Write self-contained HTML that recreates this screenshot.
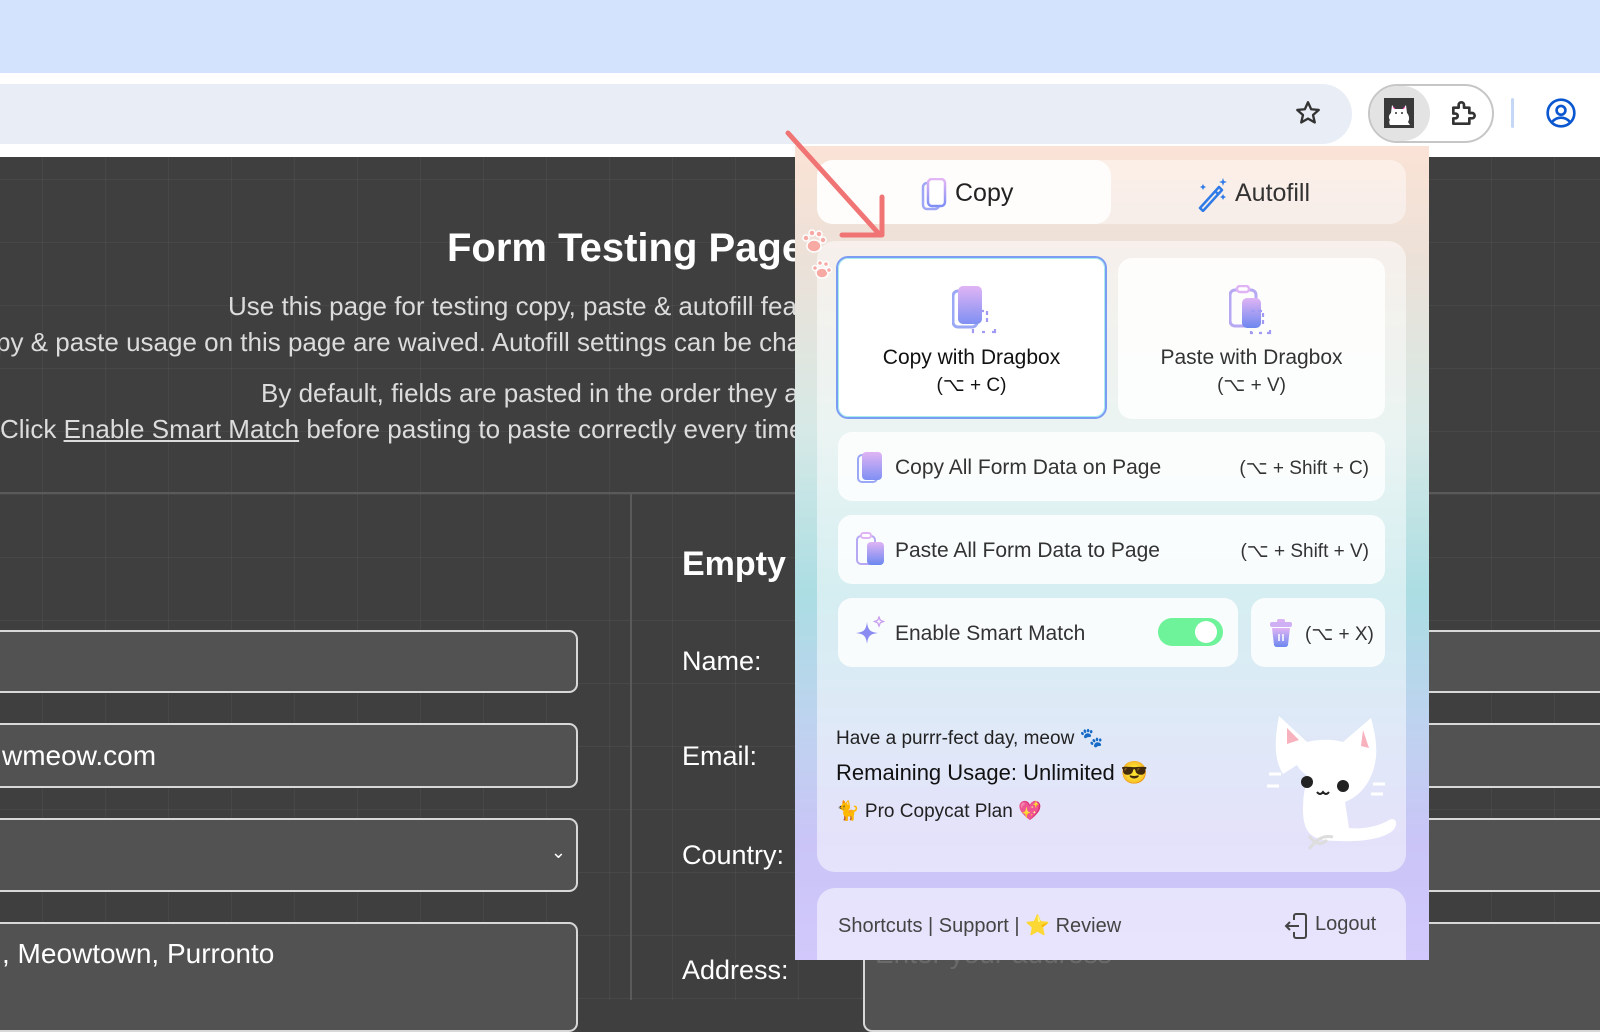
<!DOCTYPE html>
<html><head><meta charset="utf-8">
<style>
*{box-sizing:border-box;margin:0;padding:0}
body{width:1600px;height:1000px;overflow:hidden;position:relative;font-family:"Liberation Sans","Noto Sans CJK JP",sans-serif;background:#3f3f3f}
.abs{position:absolute}
.top{left:0;top:0;width:1600px;height:73px;background:#d3e3fd}
.tool{left:0;top:73px;width:1600px;height:84px;background:#fff}
.omni{left:-40px;top:84px;width:1392px;height:60px;border-radius:30px;background:#e9eef6}
.page{left:0;top:157px;width:1600px;height:843px;background-color:#3f3f3f;background-image:linear-gradient(rgba(255,255,255,.045) 1px,transparent 1px),linear-gradient(90deg,rgba(255,255,255,.045) 1px,transparent 1px);background-size:63px 63px;background-position:42px 22px}
.pt{color:#dcdcdc;font-size:26px;white-space:nowrap}
.inp{border:2px solid #d8d8d8;border-radius:9px;background:#525252;color:#fff;font-size:28px;padding-left:10px;display:flex;align-items:center}
.lab{color:#fff;font-size:27px}
.popup{left:795px;top:146px;width:634px;height:814px;background:linear-gradient(180deg,#fbe2d6 0%,#ece1d8 14%,#d6e9e6 35%,#abdde3 55%,#bfd2f0 72%,#c9c5f6 85%,#d2c8fb 100%);overflow:hidden}
.card{background:rgba(255,255,255,.82);border-radius:14px}
.rowt{font-size:21px;color:#333}
.sc{font-size:19px;color:#333}
</style></head><body>
<div class="abs top"></div>
<div class="abs tool"></div>
<div class="abs omni"></div>
<svg class="abs" style="left:1294px;top:99px" width="28" height="28" viewBox="0 0 24 24"><path d="M12 2.8l2.7 6 6.5.6-4.9 4.3 1.5 6.4L12 16.8l-5.8 3.3 1.5-6.4L2.8 9.4l6.5-.6z" fill="none" stroke="#333" stroke-width="2" stroke-linejoin="round"/></svg>
<div class="abs" style="left:1368px;top:84px;width:126px;height:59px;border:2px solid #c6c6c6;border-radius:30px"></div>
<div class="abs" style="left:1370px;top:86px;width:60px;height:55px;border-radius:28px;background:#e3e3e3"></div>
<div class="abs" style="left:1384px;top:98px;width:30px;height:30px;background:#3a3a3a"></div>
<svg class="abs" style="left:1384px;top:98px" width="30" height="30" viewBox="0 0 30 30"><path d="M8 7l3 4h8l3-4 1 8c2 2 3 6 1 9l2 3H6c-1-2-1-4 0-5-2-3-1-5 1-7z" fill="#fff"/><path d="M9 9l2 2M21 9l-2 2" stroke="#f4b" stroke-width="1"/><circle cx="12" cy="15" r="1" fill="#333"/><circle cx="18" cy="15" r="1" fill="#333"/></svg>
<svg class="abs" style="left:1448px;top:97px" width="32" height="32" viewBox="0 0 24 24"><path d="M4 8h4V6a2 2 0 014 0v2h4v4h2a2 2 0 010 4h-2v4H4v-4h1.5a1.8 1.8 0 000-3.6H4z" fill="none" stroke="#333" stroke-width="2" stroke-linejoin="round"/></svg>
<div class="abs" style="left:1511px;top:98px;width:3px;height:30px;background:#c4d7f5;border-radius:2px"></div>
<svg class="abs" style="left:1545px;top:97px" width="32" height="32" viewBox="0 0 24 24"><circle cx="12" cy="12" r="10" fill="none" stroke="#0b57d0" stroke-width="2"/><circle cx="12" cy="10" r="3.3" fill="none" stroke="#0b57d0" stroke-width="2"/><path d="M5.5 18.5c3.5-4 9.5-4 13 0" fill="none" stroke="#0b57d0" stroke-width="2"/></svg>

<div class="abs page"></div>
<div class="abs" style="left:0;top:492px;width:1600px;height:2px;background:#5a5a5a"></div>
<div class="abs" style="left:630px;top:494px;width:2px;height:506px;background:#5a5a5a"></div>
<div class="abs pt" style="left:447px;top:226px;font-size:40px;font-weight:bold;color:#fff">Form Testing Page</div>
<div class="abs pt" style="left:228px;top:291px">Use this page for testing copy, paste &amp; autofill features.</div>
<div class="abs pt" style="left:-4px;top:327px">py &amp; paste usage on this page are waived. Autofill settings can be changed.</div>
<div class="abs pt" style="left:261px;top:378px">By default, fields are pasted in the order they appear.</div>
<div class="abs pt" style="left:0;top:414px">Click <u>Enable Smart Match</u> before pasting to paste correctly every time.</div>

<div class="abs inp" style="left:-10px;top:630px;width:588px;height:63px"></div>
<div class="abs inp" style="left:-10px;top:723px;width:588px;height:65px">wmeow.com</div>
<div class="abs inp" style="left:-10px;top:818px;width:588px;height:74px"><span style="position:absolute;right:10px;top:22px;font-size:18px">&#8964;</span></div>
<div class="abs inp" style="left:-10px;top:922px;width:588px;height:110px;align-items:flex-start;padding-top:14px">, Meowtown, Purronto</div>
<div class="abs lab" style="left:682px;top:545px;font-size:34px;font-weight:bold">Empty</div>
<div class="abs lab" style="left:682px;top:646px">Name:</div>
<div class="abs lab" style="left:682px;top:741px">Email:</div>
<div class="abs lab" style="left:682px;top:840px">Country:</div>
<div class="abs lab" style="left:682px;top:955px">Address:</div>
<div class="abs inp" style="left:863px;top:630px;width:760px;height:63px"></div>
<div class="abs inp" style="left:863px;top:723px;width:760px;height:65px"></div>
<div class="abs inp" style="left:863px;top:818px;width:760px;height:74px"></div>
<div class="abs inp" style="left:863px;top:922px;width:760px;height:110px;align-items:flex-start;padding-top:14px;color:#6a6a6a">Enter your address</div>

<div class="abs popup">
  <div class="abs" style="left:22px;top:14px;width:589px;height:64px;border-radius:16px;background:rgba(255,255,255,.45)"></div>
  <div class="abs" style="left:22px;top:14px;width:294px;height:64px;border-radius:16px;background:rgba(255,255,255,.85)"></div>
  <svg class="abs" style="left:126px;top:32px" width="26" height="34" viewBox="0 0 26 34"><defs><linearGradient id="g1" x1="0" y1="0" x2="0" y2="1"><stop offset="0" stop-color="#e3b6f5"/><stop offset="1" stop-color="#7e8ef5"/></linearGradient></defs><rect x="2" y="5" width="16" height="26" rx="4" fill="none" stroke="#9ea6f5" stroke-width="2.5"/><rect x="7" y="1" width="17" height="27" rx="4" fill="#fff" stroke="url(#g1)" stroke-width="2.5"/></svg>
  <div class="abs" style="left:160px;top:33px;font-size:25px;color:#222">Copy</div>
  <svg class="abs" style="left:400px;top:30px" width="34" height="36" viewBox="0 0 34 36"><path d="M5 32L24 11l3 3L8 35z" fill="none" stroke="#2f7be8" stroke-width="2.5" stroke-linejoin="round"/><path d="M20 15l3 3" stroke="#2f7be8" stroke-width="2.5"/><path d="M28 2l1 3 3 1-3 1-1 3-1-3-3-1 3-1zM8 8l1 2 2 1-2 1-1 2-1-2-2-1 2-1zM28 18l1 2 2 1-2 1-1 2-1-2-2-1 2-1z" fill="#2f7be8"/></svg>
  <div class="abs" style="left:440px;top:33px;font-size:25px;color:#333">Autofill</div>

  <div class="abs" style="left:22px;top:95px;width:589px;height:631px;border-radius:18px;background:rgba(255,255,255,.5)"></div>
  <div class="abs" style="left:41px;top:110px;width:271px;height:163px;border-radius:12px;background:#fff;border:2.5px solid #7b9cf3;box-shadow:0 0 0 1px #a9ecec inset"></div>
  <svg class="abs" style="left:157px;top:139px" width="50" height="52" viewBox="0 0 50 52"><defs><linearGradient id="g2" x1="0" y1="0" x2="0" y2="1"><stop offset="0" stop-color="#e0b4f4"/><stop offset="1" stop-color="#7f90f3"/></linearGradient></defs><rect x="1" y="6" width="24" height="36" rx="5" fill="none" stroke="#9aa8f5" stroke-width="3"/><rect x="6" y="1" width="24" height="38" rx="5" fill="url(#g2)"/><path d="M21 26h14v14M21 44v3h4M30 47h3M40 47h6M43 44v6" fill="none" stroke="#a09af2" stroke-width="2.2" stroke-dasharray="4 3"/></svg>
  <div class="abs rowt" style="left:41px;top:200px;width:271px;text-align:center;color:#111">Copy with Dragbox</div>
  <div class="abs rowt" style="left:41px;top:228px;width:271px;text-align:center;color:#111;font-size:19px">(⌥ + C)</div>
  <div class="abs card" style="left:323px;top:112px;width:267px;height:161px"></div>
  <svg class="abs" style="left:434px;top:139px" width="50" height="52" viewBox="0 0 50 52"><defs><linearGradient id="g3" x1="0" y1="0" x2="0" y2="1"><stop offset="0" stop-color="#e0b4f4"/><stop offset="1" stop-color="#6d87f0"/></linearGradient></defs><rect x="1" y="5" width="26" height="36" rx="5" fill="none" stroke="#b6a8f2" stroke-width="3"/><rect x="8" y="1" width="12" height="6" rx="3" fill="#fff" stroke="#e0b4f4" stroke-width="2.5"/><rect x="13" y="13" width="19" height="30" rx="5" fill="url(#g3)"/><path d="M22 26h12v14M22 46v2h4M30 48h3M38 48h6M41 45v6" fill="none" stroke="#a09af2" stroke-width="2.2" stroke-dasharray="4 3"/></svg>
  <div class="abs rowt" style="left:323px;top:200px;width:267px;text-align:center">Paste with Dragbox</div>
  <div class="abs rowt" style="left:323px;top:228px;width:267px;text-align:center;font-size:19px">(⌥ + V)</div>

  <div class="abs card" style="left:43px;top:286px;width:547px;height:69px"></div>
  <svg class="abs" style="left:62px;top:305px" width="26" height="32" viewBox="0 0 26 32"><rect x="1" y="4" width="19" height="27" rx="4" fill="none" stroke="#9aa8f5" stroke-width="2"/><rect x="5" y="1" width="20" height="28" rx="4" fill="url(#g2)"/></svg>
  <div class="abs rowt" style="left:100px;top:310px">Copy All Form Data on Page</div>
  <div class="abs sc" style="left:424px;top:311px;width:150px;text-align:right">(⌥ + Shift + C)</div>

  <div class="abs card" style="left:43px;top:369px;width:547px;height:69px"></div>
  <svg class="abs" style="left:61px;top:386px" width="30" height="34" viewBox="0 0 30 34"><rect x="1" y="4" width="18" height="28" rx="4" fill="none" stroke="#b6a8f2" stroke-width="2"/><rect x="5" y="1" width="10" height="5" rx="2.5" fill="#fff" stroke="#e0b4f4" stroke-width="2"/><rect x="11" y="10" width="17" height="23" rx="4" fill="url(#g3)"/></svg>
  <div class="abs rowt" style="left:100px;top:393px">Paste All Form Data to Page</div>
  <div class="abs sc" style="left:424px;top:394px;width:150px;text-align:right">(⌥ + Shift + V)</div>

  <div class="abs card" style="left:43px;top:452px;width:400px;height:69px"></div>
  <svg class="abs" style="left:60px;top:470px" width="32" height="34" viewBox="0 0 32 34"><path d="M12 6c1 8 3 10 11 11-8 1-10 3-11 11-1-8-3-10-11-11 8-1 10-3 11-11z" fill="#8a8cf2"/><path d="M24 1l1.3 3.2L28.5 5.5 25.3 6.8 24 10 22.7 6.8 19.5 5.5 22.7 4.2z" fill="none" stroke="#c99ef0" stroke-width="1.3"/></svg>
  <div class="abs rowt" style="left:100px;top:476px">Enable Smart Match</div>
  <div class="abs" style="left:363px;top:472px;width:65px;height:28px;border-radius:14px;background:#6ef29a"></div>
  <div class="abs" style="left:400px;top:475px;width:22px;height:22px;border-radius:11px;background:#fff"></div>
  <div class="abs card" style="left:456px;top:452px;width:134px;height:69px"></div>
  <svg class="abs" style="left:474px;top:472px" width="24" height="30" viewBox="0 0 24 30"><rect x="8" y="1" width="8" height="4" rx="2" fill="#d9b3f4"/><rect x="1" y="4" width="22" height="5" rx="2" fill="#cfb0f4"/><path d="M3 10h18l-2 17a3 3 0 01-3 2H8a3 3 0 01-3-2z" fill="url(#g3)"/><path d="M10 16v7M14 16v7" stroke="#fff" stroke-width="1.5"/></svg>
  <div class="abs sc" style="left:510px;top:477px">(⌥ + X)</div>

  <div class="abs" style="left:41px;top:580px;font-size:19px;color:#222">Have a purrr-fect day, meow 🐾</div>
  <div class="abs" style="left:41px;top:614px;font-size:22px;color:#111">Remaining Usage: Unlimited 😎</div>
  <div class="abs" style="left:41px;top:653px;font-size:19px;color:#222">🐈 Pro Copycat Plan 💖</div>
  <svg class="abs" style="left:462px;top:562px" width="140" height="164" viewBox="0 0 140 164"><path d="M26 66C16 50 18 30 22 8l28 26c12-3 26-3 36 0l28-24c6 22 8 40 0 58-6 14-16 22-26 26l4 26c18 2 34-4 40-8 8-4 10 6 2 12-10 7-30 10-52 9-26 0-36-6-36-32 0-14 2-24 6-32-6-4-10-8-12-12z" fill="#fff"/><path d="M30 36l0-16 12 12zM104 38l2-16 6 18z" fill="#f7b2bd"/><circle cx="50" cy="74" r="6" fill="#222"/><circle cx="86" cy="78" r="6" fill="#222"/><path d="M60 84q3 4 6 0q3 4 6 0" fill="none" stroke="#222" stroke-width="2"/><path d="M12 66h12M10 78h12M116 76h12M114 86h12" stroke="#fff" stroke-width="3"/><path d="M52 128c6 8 12 10 18 4M52 141c8-10 14-14 24-12" fill="none" stroke="#ddd" stroke-width="3"/></svg>

  <div class="abs" style="left:22px;top:742px;width:589px;height:100px;border-radius:18px;background:rgba(255,255,255,.5)"></div>
  <div class="abs" style="left:43px;top:767px;font-size:20px;color:#444">Shortcuts | Support | ⭐ Review</div>
  <svg class="abs" style="left:489px;top:766px" width="26" height="28" viewBox="0 0 26 28"><path d="M10 8V4a2 2 0 012-2h8a2 2 0 012 2v20a2 2 0 01-2 2h-8a2 2 0 01-2-2v-4M2 14h13M6 10l-4 4 4 4" fill="none" stroke="#444" stroke-width="2"/></svg>
  <div class="abs" style="left:520px;top:767px;font-size:20px;color:#444">Logout</div>
</div>

<svg class="abs" style="left:780px;top:125px" width="120" height="125" viewBox="0 0 120 125"><path d="M8 8L100 110M62 110h40V72" fill="none" stroke="#f07474" stroke-width="5" stroke-linecap="round" stroke-linejoin="round"/></svg>
<svg class="abs" style="left:800px;top:228px" width="36" height="56" viewBox="0 0 36 56"><g fill="#f7a9a4" stroke="#fff" stroke-width="1.5"><ellipse cx="14" cy="18" rx="7" ry="6"/><circle cx="6" cy="10" r="3"/><circle cx="12" cy="5" r="3"/><circle cx="19" cy="6" r="3"/><circle cx="23" cy="12" r="3"/><ellipse cx="22" cy="45" rx="6" ry="5"/><circle cx="15" cy="40" r="2.5"/><circle cx="20" cy="35" r="2.5"/><circle cx="26" cy="36" r="2.5"/><circle cx="29" cy="42" r="2.5"/></g></svg>
</body></html>
